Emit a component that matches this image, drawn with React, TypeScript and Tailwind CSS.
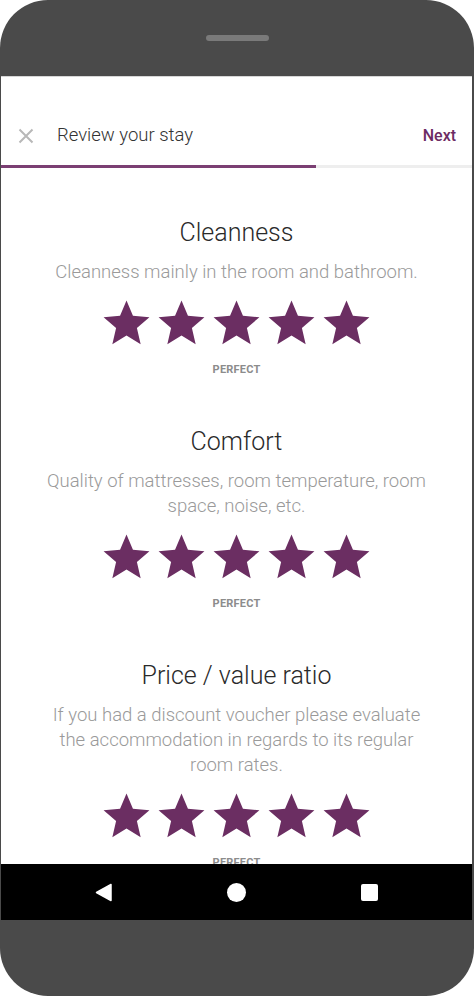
import React from "react";

const STAR = "M12 17.27L18.18 21l-1.64-7.03L22 9.24l-7.19-.61L12 2 9.19 8.63 2 9.24l5.46 4.73L5.82 21z";

function Stars() {
  return (
    <div className="flex justify-center mt-[11px]">
      {[0, 1, 2, 3, 4].map((i) => (
        <svg key={i} width="55" height="55" viewBox="0 0 24 24">
          <path d={STAR} fill="#6b2e62" />
        </svg>
      ))}
    </div>
  );
}

function Section({ title, desc, last }: { title: string; desc: string; last?: boolean }) {
  return (
    <div className={last ? "flex flex-col items-center" : "flex flex-col items-center mb-[48px]"}>
      <div className="text-[25px] leading-[32px] font-light text-[#2a2a2a]">{title}</div>
      <div className="w-[386px] mt-[11px] text-center text-[18.5px] leading-[25px] font-light text-[#9a9a9a]">{desc}</div>
      <Stars />
      <div className="mt-[11px] text-[11px] leading-[16px] font-bold text-[#8c8c8c] tracking-[0.2px]">PERFECT</div>
    </div>
  );
}

export default function App() {
  return (
    <div className="w-[474px] h-[996px] bg-white" style={{ fontFamily: "Roboto, 'Noto Sans', sans-serif" }}>
      <div className="h-full rounded-[48px] bg-[#4a4a4a] flex flex-col overflow-hidden">
        <div className="h-[76px] flex items-center justify-center">
          <div className="w-[63px] h-[6px] rounded-full bg-[#7a7a7a]" />
        </div>
        <div className="ml-[1px] mr-[2px] h-[788px] bg-white border-t border-[#d6d6d6] overflow-hidden flex flex-col">
          <div className="pt-[35px]">
            <div className="h-[48px] flex items-center pl-[17px] pr-[16px]">
              <svg width="16" height="16" viewBox="0 0 16 16" className="-mt-[1px]">
                <path d="M1.5 1.5L14.5 14.5M14.5 1.5L1.5 14.5" stroke="#b8b8b8" strokeWidth="2" strokeLinecap="butt" />
              </svg>
              <div className="ml-[23px] text-[18.5px] font-light text-[#333333]">Review your stay</div>
              <div className="ml-auto text-[16px] font-medium text-[#6d2b63]">Next</div>
            </div>
            <div className="mt-[5px] h-[3px] bg-[#eeeeee]">
              <div className="w-[315px] h-full bg-[#7b3f73]" />
            </div>
          </div>
          <div className="pt-[49px]">
            <Section title="Cleanness" desc="Cleanness mainly in the room and bathroom." />
            <Section title="Comfort" desc="Quality of mattresses, room temperature, room space, noise, etc." />
            <Section
              title="Price / value ratio"
              desc="If you had a discount voucher please evaluate the accommodation in regards to its regular room rates."
              last
            />
          </div>
        </div>
        <div className="ml-[1px] mr-[2px] h-[56px] bg-black flex items-center justify-center gap-[109px]">
          <div className="w-[24px] h-[24px] flex items-center justify-center">
            <svg width="17" height="19" viewBox="0 0 17 19">
              <path d="M16 1.5 L1.5 9.5 L16 17.5 Z" fill="white" stroke="white" strokeWidth="1.5" strokeLinejoin="round" />
            </svg>
          </div>
          <div className="w-[24px] h-[24px] flex items-center justify-center">
            <div className="w-[19px] h-[19px] rounded-full bg-white" />
          </div>
          <div className="w-[24px] h-[24px] flex items-center justify-center">
            <div className="w-[17px] h-[17px] rounded-[2px] bg-white" />
          </div>
        </div>
        <div className="flex-1" />
      </div>
    </div>
  );
}
